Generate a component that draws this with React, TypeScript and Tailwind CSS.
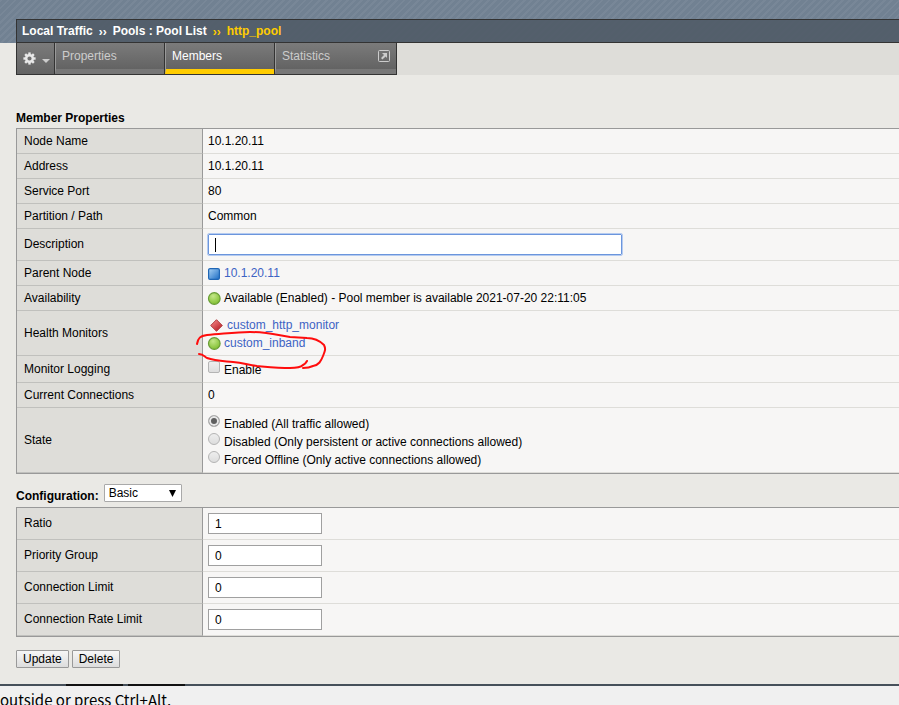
import React, { useId } from 'react';

const FONT = "font-['Liberation_Sans',Arial,sans-serif]";

const STRIPES =
  'bg-[repeating-linear-gradient(135deg,rgba(255,255,255,0.05)_0px,rgba(255,255,255,0.05)_2px,transparent_2px,transparent_5px)]';

function GearIcon() {
  const teeth = [0, 45, 90, 135, 180, 225, 270, 315];
  return (
    <svg width="13" height="13" viewBox="0 0 13 13" aria-hidden="true">
      <g fill="#e8e8e8">
        {teeth.map((angle) => (
          <rect key={angle} x="5.3" y="0.4" width="2.4" height="3" transform={`rotate(${angle} 6.5 6.5)`} />
        ))}
      </g>
      <circle cx="6.5" cy="6.5" r="3.3" fill="none" stroke="#e8e8e8" strokeWidth="2.4" />
    </svg>
  );
}

function PopOutIcon() {
  return (
    <svg width="12" height="12" viewBox="0 0 12 12" className="mt-px" aria-hidden="true">
      <rect x="0.5" y="0.5" width="11" height="11" rx="1" fill="none" stroke="#cccccc" />
      <path d="M4 3h5v5L7.6 6.6 4.4 9.4 3 8l3-3z" fill="#cccccc" />
    </svg>
  );
}

function SquareStatus() {
  const id = useId();
  return (
    <svg width="12" height="13" viewBox="0 0 12 13" className="shrink-0" role="img" aria-label="Unchecked">
      <defs>
        <linearGradient id={id} x1="0" y1="0" x2="1" y2="1">
          <stop offset="0" stopColor="#a9d2f5" />
          <stop offset="1" stopColor="#1b6cc4" />
        </linearGradient>
      </defs>
      <rect x="0.6" y="1.6" width="10.8" height="10.8" rx="1.5" fill={`url(#${id})`} stroke="#1f66b5" strokeWidth="1.2" />
    </svg>
  );
}

function CircleStatus() {
  const id = useId();
  return (
    <svg width="12" height="13" viewBox="0 0 12 13" className="shrink-0 overflow-visible" role="img" aria-label="Available">
      <defs>
        <radialGradient id={id} cx="0.4" cy="0.3" r="0.75">
          <stop offset="0" stopColor="#c3e788" />
          <stop offset="1" stopColor="#7dbd2c" />
        </radialGradient>
      </defs>
      <circle cx="6.3" cy="6.5" r="5.8" fill={`url(#${id})`} stroke="#689c35" strokeWidth="1.2" />
    </svg>
  );
}

function DiamondStatus() {
  const id = useId();
  return (
    <svg width="13" height="13" viewBox="0 0 13 13" className="shrink-0" role="img" aria-label="Offline">
      <defs>
        <linearGradient id={id} x1="0.2" y1="0.1" x2="0.8" y2="0.9">
          <stop offset="0" stopColor="#f08080" />
          <stop offset="1" stopColor="#b81f26" />
        </linearGradient>
      </defs>
      <path d="M6.5 0.7 12.3 6.5 6.5 12.3 0.7 6.5z" fill={`url(#${id})`} stroke="#b03a3c" strokeLinejoin="round" />
    </svg>
  );
}

// hand-drawn mark around the inband monitor
function RedMark() {
  return (
    <svg
      className="pointer-events-none absolute -left-2 top-4 z-10"
      width="134"
      height="46"
      viewBox="0 0 134 46"
      fill="none"
      stroke="#ff0d0d"
      strokeWidth="2"
      strokeLinecap="round"
      strokeLinejoin="round"
      aria-hidden="true"
    >
      <path d="M2 17 C3 11 5 9 12 8 C28 7 40 5 55 5 C72 5 82 8 95 10 L112 11 C118 11 124 13 129 18 C131 22 130 24 128 29 C126 34 124 38 118 39 C114 41 110 41 108 41" />
      <path d="M4 27 C8 27 9 29 12 31 C20 34 28 34 38 35 C48 36 54 38 62 39 C74 40 84 41 95 41 C103 41 107 39 108 38 C110 37 111 36 112 34" />
    </svg>
  );
}

interface RowProps {
  label: string;
  height: string;
  children: React.ReactNode;
  htmlFor?: string;
}

function Row({ label, height, children, htmlFor }: RowProps) {
  return (
    <tr className={height}>
      <th
        scope="row"
        className={`w-[186px] border-b border-r border-b-[#c0c0bd] border-r-[#999999] bg-[#deddd9] pl-[7px] text-left font-normal ${htmlFor ? 'pb-0.5 pt-0' : 'py-0'}`}
      >
        {htmlFor ? <label htmlFor={htmlFor}>{label}</label> : label}
      </th>
      <td className="relative border-b border-b-[#deddd9] bg-[#f7f6f5] py-0 pl-[5px]">{children}</td>
    </tr>
  );
}

const TABLE = 'w-full table-fixed border-separate border-spacing-0 border-y border-l border-[#999999]';

const CONFIG = [
  { id: 'ratio', label: 'Ratio', value: '1' },
  { id: 'priority', label: 'Priority Group', value: '0' },
  { id: 'limit', label: 'Connection Limit', value: '0' },
  { id: 'rate', label: 'Connection Rate Limit', value: '0' },
];

const STATES = [
  'Enabled (All traffic allowed)',
  'Disabled (Only persistent or active connections allowed)',
  'Forced Offline (Only active connections allowed)',
];

const LINK = 'text-[#3d63c4]';

const TAB =
  'flex h-[31px] border-b-[5px] border-l border-l-[#999999] bg-linear-to-b from-[#7b7b7b] to-[#636363] pl-1.5 pt-1.5 leading-[14px]';

const BUTTON =
  'h-[18px] rounded-[1px] border border-[#999999] bg-linear-to-b from-[#f6f6f6] to-[#dddddd] px-1.5 leading-4';

export default function App() {
  return (
    <div className={`flex min-h-screen flex-col bg-[#eae9e5] text-[12px] leading-[14px] text-black ${FONT}`}>
      <header className={`bg-[#718192] pl-4 pt-[19px] ${STRIPES}`}>
        <nav
          aria-label="Breadcrumb"
          className="flex h-6 items-center border-y border-l border-[#333333] bg-[#505b67]/90 pl-[5px] font-bold text-white"
        >
          <a href="#local">Local Traffic</a>
          <span className="px-1.5 pt-0.5">››</span>
          <a href="#pools">Pools : Pool List</a>
          <span className="px-1.5 pt-0.5 text-[#ffcc00]">››</span>
          <span className="text-[#ffcc00]">http_pool</span>
        </nav>
      </header>

      <div className="flex pl-4">
        <nav aria-label="Pool" className="flex h-8 border-x border-b border-[#333333] bg-[#333333]">
          <button
            type="button"
            aria-label="Options"
            className="mr-px flex w-[37px] items-center bg-linear-to-b from-[#7b7b7b] to-[#636363] pl-1.5"
          >
            <GearIcon />
            <span className="ml-1.5 mt-1 border-x-4 border-t-4 border-x-transparent border-t-[#cccccc]" />
          </button>
          <a href="#properties" className={`${TAB} mr-px w-[109px] border-b-[#777777] text-[#cccccc]`}>
            Properties
          </a>
          <a href="#members" aria-current="page" className={`${TAB} mr-px w-[109px] border-b-[#ffcc00] text-white`}>
            Members
          </a>
          <a href="#statistics" className={`${TAB} w-[121px] justify-between border-b-[#777777] pr-1.5 text-[#cccccc]`}>
            Statistics
            <PopOutIcon />
          </a>
        </nav>
        <div className="h-8 flex-1 bg-[#deddd9]" />
      </div>

      <main className="pl-4 pt-9">
        <h2 className="pb-[3px] font-bold">Member Properties</h2>
        <table className={TABLE}>
          <tbody>
            <Row label="Node Name" height="h-[25px]">10.1.20.11</Row>
            <Row label="Address" height="h-[25px]">10.1.20.11</Row>
            <Row label="Service Port" height="h-[25px]">80</Row>
            <Row label="Partition / Path" height="h-[25px]">Common</Row>
            <Row label="Description" height="h-8" htmlFor="description">
              <input
                id="description"
                type="text"
                className="block h-[21px] w-[414px] rounded-[1px] border border-[#6b95dc] bg-white px-1.5 outline-1 outline-[#b5cbf0]"
              />
              <span className="absolute left-3 top-[9px] h-[14px] w-px bg-black" />
            </Row>
            <Row label="Parent Node" height="h-[25px]">
              <div className="flex items-center gap-1">
                <SquareStatus />
                <a href="#node" className={LINK}>10.1.20.11</a>
              </div>
            </Row>
            <Row label="Availability" height="h-[25px]">
              <div className="flex items-center gap-1">
                <CircleStatus />
                Available (Enabled) - Pool member is available 2021-07-20 22:11:05
              </div>
            </Row>
            <Row label="Health Monitors" height="h-[45px]">
              <div className="pt-0.5">
                <div className="flex h-[18px] items-center gap-1 pl-0.5">
                  <DiamondStatus />
                  <a href="#http-monitor" className={LINK}>custom_http_monitor</a>
                </div>
                <div className="flex h-[18px] items-center gap-1">
                  <CircleStatus />
                  <a href="#inband" className={LINK}>custom_inband</a>
                </div>
              </div>
              <RedMark />
            </Row>
            <Row label="Monitor Logging" height="h-[27px]">
              <label className="flex items-start gap-1">
                <input
                  type="checkbox"
                  className="h-3 w-3 appearance-none rounded-[2px] border border-[#b4b4b4] bg-linear-to-b from-[#eeeeee] to-[#dddddd]"
                />
                <span className="pt-0.5">Enable</span>
              </label>
            </Row>
            <Row label="Current Connections" height="h-[25px]">0</Row>
            <Row label="State" height="h-[65px]">
              {STATES.map((state, index) => (
                <label key={state} className="flex h-[18px] items-start gap-1">
                  <input
                    type="radio"
                    name="state"
                    defaultChecked={index === 0}
                    className="mt-0.5 h-3 w-3 appearance-none rounded-full border border-[#b4b4b4] bg-linear-to-b from-[#eeeeee] to-[#dddddd] checked:bg-none checked:bg-[#5f5f5f] checked:shadow-[inset_0_0_0_2px_#e8e8e8]"
                  />
                  <span className="pt-1">{state}</span>
                </label>
              ))}
            </Row>
          </tbody>
        </table>

        <div className="flex items-end gap-[5px] pb-1 pt-2.5">
          <label htmlFor="configuration" className="font-bold">Configuration:</label>
          <div className="relative mb-px">
            <select
              id="configuration"
              className="block h-[18px] w-[78px] appearance-none rounded-[1px] border border-[#a9a9a9] bg-white pl-1 leading-4"
            >
              <option>Basic</option>
              <option>Advanced</option>
            </select>
            <svg
              className="pointer-events-none absolute right-1.5 top-1.5"
              width="7"
              height="7"
              viewBox="0 0 7 7"
              aria-hidden="true"
            >
              <path d="M0 0h7L3.5 7z" fill="#000000" />
            </svg>
          </div>
        </div>
        <table className={TABLE}>
          <tbody>
            {CONFIG.map((item) => (
              <Row key={item.id} label={item.label} height="h-8" htmlFor={item.id}>
                <input
                  id={item.id}
                  type="text"
                  defaultValue={item.value}
                  className="block h-[21px] w-[114px] border border-[#a0a0a0] bg-white px-1.5"
                />
              </Row>
            ))}
          </tbody>
        </table>

        <div className="flex gap-[3px] pb-4 pt-[13px]">
          <button type="button" className={BUTTON}>Update</button>
          <button type="button" className={BUTTON}>Delete</button>
        </div>
      </main>

      <footer className="bg-[#f0f0f0] font-['Noto_Sans_CJK_KR',sans-serif] text-[15px] leading-7">
        <div className="flex h-0.5 gap-[5px] bg-[#46505a] pl-[66px]">
          <span className="w-[57px] bg-[#111111]" />
          <span className="w-[57px] bg-[#111111]" />
        </div>
        outside or press Ctrl+Alt.
      </footer>
    </div>
  );
}
